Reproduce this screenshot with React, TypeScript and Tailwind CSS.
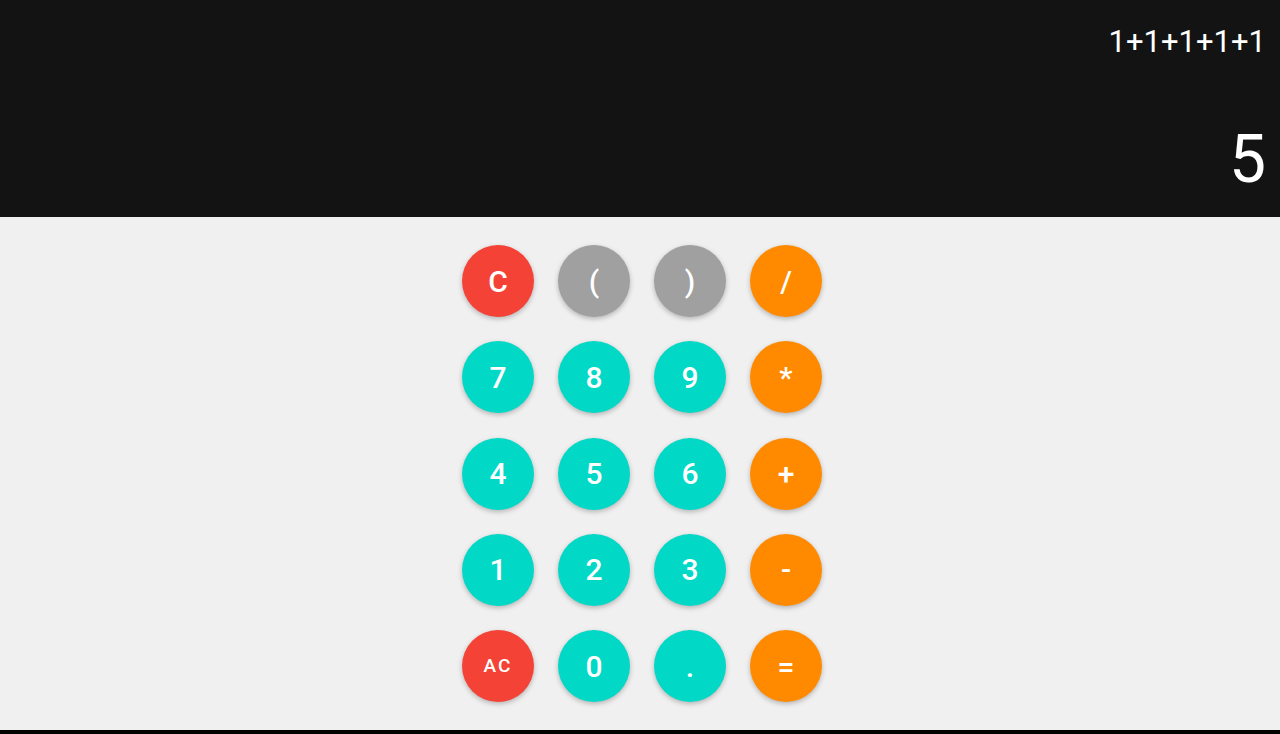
import React from 'react';

type Key = { label: string; color: string; small?: boolean };

const RED = 'bg-[#f44336]';
const GRAY = 'bg-[#a0a0a0]';
const ORANGE = 'bg-[#ff8a00]';
const TEAL = 'bg-[#02d8c6]';

const keys: Key[] = [
  { label: 'C', color: RED },
  { label: '(', color: GRAY },
  { label: ')', color: GRAY },
  { label: '/', color: ORANGE },
  { label: '7', color: TEAL },
  { label: '8', color: TEAL },
  { label: '9', color: TEAL },
  { label: '*', color: ORANGE },
  { label: '4', color: TEAL },
  { label: '5', color: TEAL },
  { label: '6', color: TEAL },
  { label: '+', color: ORANGE },
  { label: '1', color: TEAL },
  { label: '2', color: TEAL },
  { label: '3', color: TEAL },
  { label: '-', color: ORANGE },
  { label: 'AC', color: RED, small: true },
  { label: '0', color: TEAL },
  { label: '.', color: TEAL },
  { label: '=', color: ORANGE },
];

export default function App() {
  return (
    <div className="w-[1280px] h-[734px] flex flex-col bg-black font-['Roboto',sans-serif]">
      {/* Display */}
      <div className="h-[217px] bg-[#131313] flex flex-col items-end justify-between pr-[14px] text-white">
        <div className="text-[31px] leading-none pt-[26px]">1+1+1+1+1</div>
        <div className="text-[66px] leading-none pb-[24px] font-normal">5</div>
      </div>

      {/* Keypad */}
      <div className="h-[513px] bg-[#f0f0f0] flex justify-center pt-[28px] pl-[4px]">
        <div className="grid grid-cols-4 gap-x-6 gap-y-[24.3px] h-fit">
          {keys.map((k) => (
            <button
              key={k.label}
              className={`${k.color} w-[72px] h-[72px] rounded-full flex items-center justify-center text-white shadow-[0_2px_5px_rgba(0,0,0,0.25)] ${
                k.small ? 'text-[19px] tracking-[2px] font-medium' : 'text-[30px] font-medium'
              }`}
            >
              {k.label}
            </button>
          ))}
        </div>
      </div>
      <div className="h-[4px] bg-black" />
    </div>
  );
}
